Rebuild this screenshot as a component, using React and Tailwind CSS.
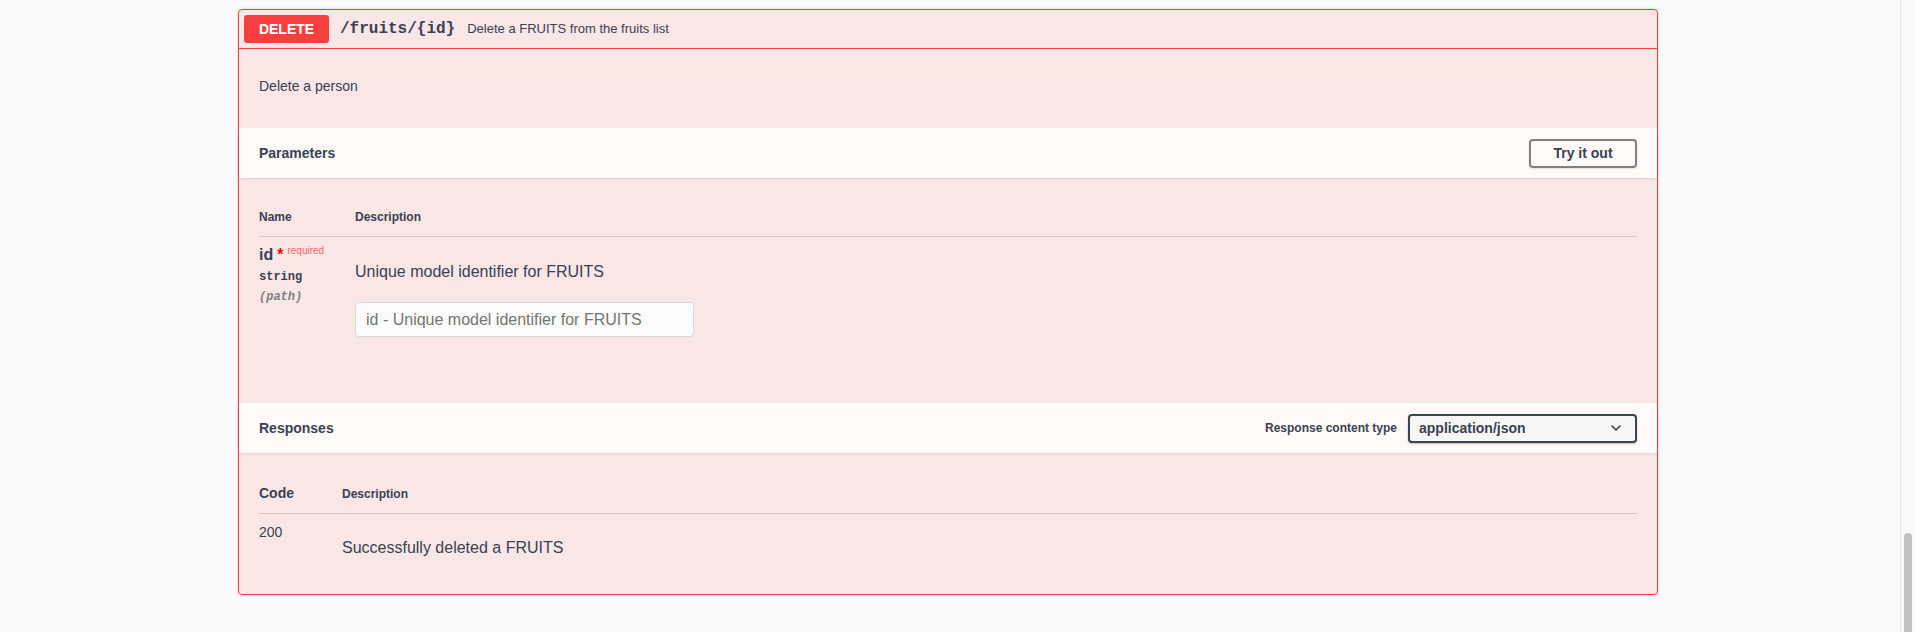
const sans = "font-['Liberation_Sans',Arial,sans-serif]";
const mono = "font-['Liberation_Mono','Courier_New',monospace]";

function SectionHeader({ title, children }) {
  return (
    <div className="flex h-[50px] items-center justify-between bg-white/80 px-5 shadow-[0_1px_2px_rgba(0,0,0,0.1)]">
      <h4 className="text-[14px] font-bold text-[#3b4151]">{title}</h4>
      {children}
    </div>
  );
}

function Parameters() {
  return (
    <div className="px-5 pt-[32px] pb-[66px]">
      <div className="flex border-b border-[#3b4151]/20 pb-[11px] text-[12px] font-bold leading-[15px] text-[#3b4151]">
        <div className="w-[96px]">Name</div>
        <div>Description</div>
      </div>
      <div className="flex pt-[8px]">
        <div className="w-[96px]">
          <div className="flex items-start text-[16px] font-bold leading-5 text-[#3b4151]">
            id
            <span className="ml-[4px] text-[16px] font-bold text-[#ff0000]">*</span>
            <span className="relative -top-[2px] ml-[4px] text-[10px] font-normal leading-4 text-[#ff0000]/60">required</span>
          </div>
          <div className={`${mono} mt-[5px] text-[12px] font-bold leading-[15px] text-[#3b4151]`}>string</div>
          <div className={`${mono} mt-[5px] text-[12px] font-bold italic leading-[15px] text-[#808080]`}>(path)</div>
        </div>
        <div className="pt-[17px]">
          <p className="text-[16px] leading-5 text-[#3b4151]">Unique model identifier for FRUITS</p>
          <div className="mt-[20px] flex h-[35px] w-[339px] items-center rounded-[4px] border border-[#d9d9d9] bg-[#fbfbfb] px-[10px] text-[16px] text-[#757575]">
            id - Unique model identifier for FRUITS
          </div>
        </div>
      </div>
    </div>
  );
}

function Responses() {
  return (
    <div className="px-5 pt-[31px] pb-[36px]">
      <div className="flex items-end border-b border-[#3b4151]/20 pb-[11px] font-bold text-[#3b4151]">
        <div className="w-[83px] text-[14px] leading-[18px]">Code</div>
        <div className="text-[12px] leading-[16px]">Description</div>
      </div>
      <div className="flex pt-[9px] text-[#3b4151]">
        <div className="w-[83px] text-[14px] leading-[18px]">200</div>
        <div className="pt-[15px] text-[16px] leading-5">Successfully deleted a FRUITS</div>
      </div>
    </div>
  );
}

export default function App() {
  return (
    <div className={`${sans} flex h-[632px] overflow-hidden bg-[#fafafa]`}>
      <main className="flex-1">
        <div className="ml-[238px] mt-[9px] w-[1420px] rounded-[4px] border border-[#f93e3e] bg-[#f93e3e]/10 shadow-[0_0_3px_rgba(0,0,0,0.19)]">
          <div className="flex h-[39px] items-center border-b border-[#f93e3e] px-[5px]">
            <span className="flex h-[28px] w-[85px] items-center justify-center rounded-[3px] bg-[#f93e3e] text-[14px] font-bold text-white">
              DELETE
            </span>
            <span className={`${mono} ml-[11px] text-[16px] font-bold text-[#3b4151]`}>/fruits/&#123;id&#125;</span>
            <span className="ml-[12px] text-[13px] text-[#3b4151]">Delete a FRUITS from the fruits list</span>
          </div>
          <div className="px-5 pt-[27px] pb-[32px] text-[14px] leading-5 text-[#3b4151]">Delete a person</div>
          <SectionHeader title="Parameters">
            <button className="h-[29px] w-[108px] rounded-[4px] border-2 border-[#808080] text-[14px] font-bold text-[#3b4151] shadow-[0_1px_2px_rgba(0,0,0,0.1)]">
              Try it out
            </button>
          </SectionHeader>
          <Parameters />
          <SectionHeader title="Responses">
            <div className="flex items-center gap-[11px]">
              <span className="text-[12px] font-bold text-[#3b4151]">Response content type</span>
              <div className="flex h-[29px] w-[229px] items-center justify-between rounded-[4px] border-2 border-[#41444e] bg-[#f7f7f7] pl-[9px] pr-[14px] text-[14px] font-bold text-[#3b4151] shadow-[0_1px_2px_rgba(0,0,0,0.25)]">
                application/json
                <svg width="10" height="6" viewBox="0 0 10 6" fill="none">
                  <path d="M1 1l4 4 4-4" stroke="#3b4151" strokeWidth="1.6" strokeLinecap="round" strokeLinejoin="round" />
                </svg>
              </div>
            </div>
          </SectionHeader>
          <Responses />
        </div>
      </main>
      <div className="w-[15px] border-l border-[#e6e6e6] pl-[3px] pt-[533px]">
        <div className="h-[300px] w-[8px] rounded-full bg-[#c1c1c1]" />
      </div>
    </div>
  );
}
